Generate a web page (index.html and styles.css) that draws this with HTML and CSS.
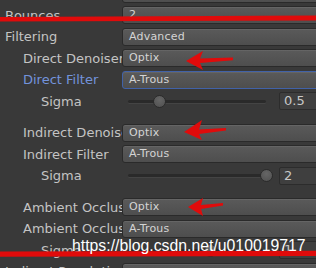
FILE: index.html
```html
<!DOCTYPE html>
<html lang="en">
<head>
  <meta charset="UTF-8">
  <meta name="viewport" content="width=device-width, initial-scale=1.0">
  <title>Lightmapping Settings</title>
  <link rel="stylesheet" href="styles.css">
</head>
<body>
  <div class="inspector">
    <div class="row"><span class="label"></span><div class="field popup"></div></div>
    <div class="row"><span class="label">Bounces</span><div class="field popup">2</div></div>
    <div class="row"><span class="label">Filtering</span><div class="field popup">Advanced</div></div>
    <div class="row lvl1"><span class="label">Direct Denoiser</span><div class="field popup">Optix</div></div>
    <div class="row lvl1 focused"><span class="label">Direct Filter</span><div class="field popup">A-Trous</div></div>
    <div class="row lvl2">
      <span class="label">Sigma</span>
      <div class="slider">
        <div class="track"><div class="knob" style="left: 23%"></div></div>
        <div class="number">0.5</div>
      </div>
    </div>

    <div class="row lvl1 group"><span class="label">Indirect Denoiser</span><div class="field popup">Optix</div></div>
    <div class="row lvl1"><span class="label">Indirect Filter</span><div class="field popup">A-Trous</div></div>
    <div class="row lvl2">
      <span class="label">Sigma</span>
      <div class="slider">
        <div class="track"><div class="knob" style="left: 100%"></div></div>
        <div class="number">2</div>
      </div>
    </div>

    <div class="row lvl1 group"><span class="label">Ambient Occlusion Denoiser</span><div class="field popup">Optix</div></div>
    <div class="row lvl1"><span class="label">Ambient Occlusion Filter</span><div class="field popup">A-Trous</div></div>
    <div class="row lvl2">
      <span class="label">Sigma</span>
      <div class="slider">
        <div class="track"><div class="knob" style="left: 60%"></div></div>
        <div class="number">1</div>
      </div>
    </div>

    <div class="row"><span class="label">Indirect Resolution</span><div class="field popup"></div></div>
  </div>

  <!-- red annotations drawn on top of the screenshot -->
  <svg class="marks" width="316" height="268" viewBox="0 0 316 268">
    <polygon points="0,17 316,15.6 316,20.6 0,21.4" />
    <polygon points="0,251.4 316,250.8 316,255.9 0,256.7" />
    <polygon points="186,61 203,51 200,58.5 233,57.5 233,60.2 200,63 203,70" />
    <polygon points="184,132 202,120 199,129.5 226,128 226,130.6 199,134 202,140" />
    <polygon points="188,207 203,198 201,205 223,203 223,205.6 201,209 203,216" />
  </svg>
  <div class="watermark">https://blog.csdn.net/u010019717</div>
</body>
</html>
```

FILE: styles.css
```css
body {
  margin: 0;
  width: 316px;
  height: 268px;
  overflow: hidden;
  position: relative;
  background: #393939;
  font-family: "DejaVu Sans", Verdana, sans-serif;
}
.inspector {
  margin-top: -17px;
}
.row {
  display: grid;
  grid-template-columns: 122px 1fr;
  align-items: center;
  height: 21.5px;
}
.row.group {
  margin-top: 10px;
}
.label {
  padding-left: 5px;
  font-size: 13px;
  color: #c4c4c4;
  white-space: nowrap;
  overflow: hidden;
}
.lvl1 .label {
  padding-left: 23px;
}
.lvl2 .label {
  padding-left: 41px;
}
.focused .label {
  color: #7393dc;
}
.field {
  height: 18px;
  box-sizing: border-box;
  margin-right: -6px;
  border-radius: 3px;
}
.popup {
  padding: 0 6px;
  font-size: 11px;
  line-height: 16px;
  letter-spacing: 0.2px;
  color: #d4d4d4;
  background: linear-gradient(#5a5a5a, #4e4e4e);
  border: 1px solid #2a2a2a;
  box-shadow: inset 0 1px 0 rgba(255, 255, 255, 0.07);
}
.focused .popup {
  border-color: #4162a8;
}
.slider {
  display: flex;
  align-items: center;
  gap: 7px;
  margin-right: -6px;
}
.track {
  position: relative;
  flex: 1;
  height: 3px;
  margin-left: 6px;
  margin-right: 6px;
  border-radius: 2px;
  background: #2a2a2a;
  box-shadow: 0 1px 0 #444;
}
.knob {
  position: absolute;
  top: -5px;
  width: 13px;
  height: 13px;
  margin-left: -6.5px;
  box-sizing: border-box;
  border-radius: 50%;
  background: radial-gradient(circle at 50% 35%, #666, #4f4f4f);
  border: 1px solid #2b2b2b;
}
.number {
  width: 43px;
  height: 18px;
  box-sizing: border-box;
  padding-left: 4px;
  font-size: 13px;
  line-height: 16px;
  color: #c8c8c8;
  background: #3f3f3f;
  border: 1px solid #2c2c2c;
  border-radius: 2px;
}
.marks {
  position: absolute;
  top: 0;
  left: 0;
  fill: #e00b0b;
}
.watermark {
  position: absolute;
  left: 72px;
  top: 237px;
  font-family: "Liberation Sans", Arial, sans-serif;
  font-size: 15.8px;
  color: #fff;
  white-space: nowrap;
}
```
